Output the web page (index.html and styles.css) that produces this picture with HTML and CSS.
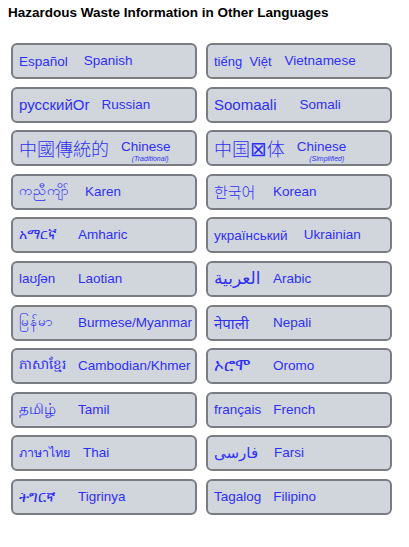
FILE: index.html
```html
<!DOCTYPE html>
<html lang="en">
<head>
  <meta charset="UTF-8" />
  <meta name="viewport" content="width=device-width, initial-scale=1.0"/>
  <title>Hazardous Waste Information in Other Languages</title>
  <link rel="stylesheet" href="styles.css">
</head>
<body>

<h1 class="page-title">Hazardous Waste Information in Other Languages</h1>

<div class="lang-grid">
  <!-- Row 1 -->
  <a class="lang-btn" href="#"><span class="native pad-wide">Español</span><span class="label">Spanish</span></a>
  <a class="lang-btn" href="#"><span class="native native-sm">tiếng&nbsp; Việt</span><span class="label">Vietnamese</span></a>

  <!-- Row 2 -->
  <a class="lang-btn" href="#"><span class="native native-lg">русскийOr</span><span class="label">Russian</span></a>
  <a class="lang-btn" href="#"><span class="native native-lg pad-xwide">Soomaali</span><span class="label">Somali</span></a>

  <!-- Row 3 -->
  <a class="lang-btn" href="#"><span class="native cjk">中國傳統的</span><span class="label stacked">Chinese<small>(Traditional)</small></span></a>
  <a class="lang-btn" href="#"><span class="native cjk">中国<span class="missing">⊠</span>体</span><span class="label stacked">Chinese<small>(Simplified)</small></span></a>

  <!-- Row 4 -->
  <a class="lang-btn" href="#"><span class="native pad-wide">ကညီကျိာ်</span><span class="label">Karen</span></a>
  <a class="lang-btn" href="#"><span class="native kr">한국어</span><span class="label">Korean</span></a>

  <!-- Row 5 -->
  <a class="lang-btn" href="#"><span class="native">አማርኛ</span><span class="label">Amharic</span></a>
  <a class="lang-btn" href="#"><span class="native pad-wide">український</span><span class="label">Ukrainian</span></a>

  <!-- Row 6 -->
  <a class="lang-btn" href="#"><span class="native">laʊʃən</span><span class="label">Laotian</span></a>
  <a class="lang-btn" href="#"><span class="native native-xl">العربية</span><span class="label">Arabic</span></a>

  <!-- Row 7 -->
  <a class="lang-btn" href="#"><span class="native">မြန်မာ</span><span class="label">Burmese/Myanmar</span></a>
  <a class="lang-btn" href="#"><span class="native native-lg">नेपाली</span><span class="label">Nepali</span></a>

  <!-- Row 8 -->
  <a class="lang-btn" href="#"><span class="native tight">ភាសាខ្មែរ</span><span class="label">Cambodian/Khmer</span></a>
  <a class="lang-btn" href="#"><span class="native native-xl">ኦሮሞ</span><span class="label">Oromo</span></a>

  <!-- Row 9 -->
  <a class="lang-btn" href="#"><span class="native native-lg">தமிழ்</span><span class="label">Tamil</span></a>
  <a class="lang-btn" href="#"><span class="native">français</span><span class="label">French</span></a>

  <!-- Row 10 -->
  <a class="lang-btn" href="#"><span class="native thai">ภาษาไทย</span><span class="label">Thai</span></a>
  <a class="lang-btn" href="#"><span class="native native-lg pad-wide">فارسی</span><span class="label">Farsi</span></a>

  <!-- Row 11 -->
  <a class="lang-btn" href="#"><span class="native native-lg">ትግርኛ</span><span class="label">Tigrinya</span></a>
  <a class="lang-btn" href="#"><span class="native">Tagalog</span><span class="label">Filipino</span></a>
</div>

</body>
</html>
```

FILE: styles.css
```css
body {
  font-family: "Liberation Sans", Arial, "Noto Sans", "DejaVu Sans", "Noto Sans CJK SC", sans-serif;
  margin: 5px 8px;
  background: #fff;
  color: #000;
}

.page-title {
  font-size: 13.5px;
  font-weight: bold;
  margin: 0;
  line-height: 16px;
}

.lang-grid {
  display: grid;
  grid-template-columns: 186px 186px;
  grid-auto-rows: 36px;
  column-gap: 9px;
  row-gap: 7.6px;
  margin: 22px 0 0 3px;
}

.lang-btn {
  display: flex;
  align-items: center;
  box-sizing: border-box;
  padding: 0 6px;
  background: #d1d6dd;
  border: 2px solid #797d83;
  border-radius: 6px;
  color: #2f2ff5;
  text-decoration: none;
  font-size: 13.5px;
  white-space: nowrap;
}

.native {
  box-sizing: border-box;
  min-width: 59px;
  padding-right: 12px;
}

.native.pad-wide {
  padding-right: 16px;
}

.native.pad-xwide {
  padding-right: 23px;
}

.native.tight {
  padding-right: 5px;
}

.native-sm {
  font-size: 13px;
  padding-right: 13px;
}

.native-lg {
  font-size: 15px;
}

.native-xl {
  font-size: 17px;
}

.thai {
  font-size: 12.5px;
  padding-right: 13px;
}

.cjk {
  font-family: "Noto Sans CJK TC", "Noto Sans CJK SC", sans-serif;
  font-size: 18px;
  font-weight: 300;
  padding-right: 12px;
}

.missing {
  font-family: "DejaVu Sans", sans-serif;
  font-size: 20px;
  font-weight: normal;
}

.kr {
  font-family: "Noto Sans CJK KR", sans-serif;
  font-size: 15px;
  font-weight: 300;
  padding-right: 11px;
}

.label {
  line-height: 16px;
}

.label.stacked {
  display: inline-flex;
  flex-direction: column;
  align-items: flex-end;
  margin-top: 4px;
}

.label.stacked small {
  font-size: 7px;
  font-style: italic;
  line-height: 7px;
  margin-right: 2px;
}
```
